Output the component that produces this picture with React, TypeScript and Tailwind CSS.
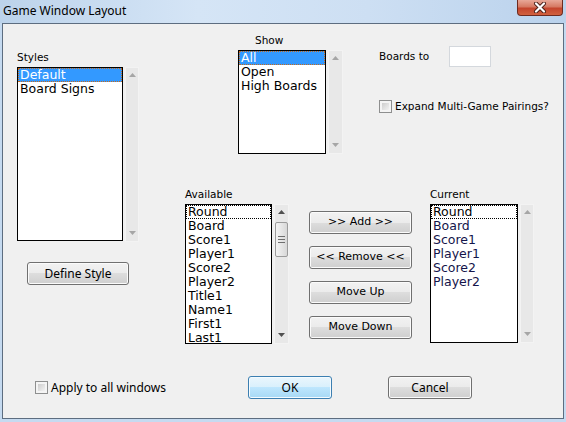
import React from 'react';

const segoe = "font-['Noto_Sans',sans-serif]";
const tahoma = "font-['DejaVu_Sans',sans-serif]";

interface ListBoxProps {
  items: string[];
  selected?: number;
  focused?: number;
  size: string;
  textColor?: string;
}

const ListBox: React.FC<ListBoxProps> = ({ items, selected, focused, size, textColor = 'text-black' }) => (
  <div className={`${size} border border-black bg-white overflow-hidden ${tahoma} text-[12.5px] leading-[14px] ${textColor}`}>
    {items.map((item, index) => {
      const isSel = index === selected;
      const isFocus = index === focused;
      return (
        <div
          key={index}
          className={
            isSel
              ? 'h-[14px] px-[1px] bg-[#3399ff] text-white border border-dotted border-[#c86a1a] leading-[12px]'
              : isFocus
              ? 'h-[14px] px-[1px] text-black border border-dotted border-black leading-[12px]'
              : 'h-[14px] px-[2px] whitespace-nowrap'
          }
        >
          {item}
        </div>
      );
    })}
  </div>
);

const Arrow: React.FC<{ down?: boolean; dark?: boolean }> = ({ down, dark }) => (
  <svg width="7" height="4" viewBox="0 0 7 4">
    <polygon points={down ? '0,0 7,0 3.5,4' : '3.5,0 7,4 0,4'} fill={dark ? '#505050' : '#a6a6a6'} />
  </svg>
);

const ScrollStrip: React.FC<{ size: string; thumb?: boolean }> = ({ size, thumb }) => (
  <div className={`${size} bg-[#e8e8e8] border border-[#f3f3f3] flex flex-col items-center pt-[5px] pb-[6px]`}>
    <Arrow dark={thumb} />
    {thumb && (
      <div className="mt-[8px] w-[13px] h-[35px] rounded-[2px] border border-[#9b9b9b] bg-[linear-gradient(90deg,#f4f4f4,#e6e6e6_50%,#d8d8d8)] flex flex-col items-center justify-center gap-[2px]">
        <div className="w-[7px] h-[1px] bg-[#6e6e6e]" />
        <div className="w-[7px] h-[1px] bg-[#6e6e6e]" />
        <div className="w-[7px] h-[1px] bg-[#6e6e6e]" />
      </div>
    )}
    <div className="flex-1" />
    <Arrow down dark={thumb} />
  </div>
);

const WinButton: React.FC<{ label: string; size: string; primary?: boolean; font?: string }> = ({
  label,
  size,
  primary,
  font = `${segoe} text-[12px]`,
}) => (
  <div
    className={`${size} rounded-[3px] border flex items-center justify-center text-black ${font} ${
      primary
        ? 'border-[#3c7fb1] bg-[linear-gradient(#eaf6fd,#d9f0fc_50%,#bee6fd_50%,#a7d9f5)] shadow-[inset_0_0_0_1px_#f4fbff]'
        : 'border-[#707070] bg-[linear-gradient(#f2f2f2,#ebebeb_50%,#dddddd_50%,#cfcfcf)] shadow-[inset_0_0_0_1px_#fbfbfb]'
    }`}
  >
    {label}
  </div>
);

const CheckBox: React.FC = () => (
  <div className="w-[13px] h-[13px] border border-[#8e8f8f] bg-[#f4f4f4] p-[2px]">
    <div className="w-full h-full bg-[linear-gradient(135deg,#cdcdcd,#f2f2f2)]" />
  </div>
);

const tahomaBtn = `${tahoma} text-[11px]`;

export default function App() {
  return (
    <div className="w-[566px] h-[422px] bg-[#c5daf0] overflow-hidden">
      {/* Title bar */}
      <div className="h-[23px] flex items-start bg-[linear-gradient(90deg,#bcd3eb,#d5e5f6_35%,#cddff3_65%,#bad2ec)]">
        <div className={`pl-[3px] pt-[2px] text-[12px] text-black ${segoe} flex-1`}>Game Window Layout</div>
        <div className="mr-[3px] w-[46px] h-[16px] rounded-b-[4px] border border-t-0 border-[#6e2b20] bg-[linear-gradient(#e8a898,#d67a63_45%,#c4452d_55%,#d1613f)] flex items-center justify-center">
          <svg width="14" height="11" viewBox="0 0 14 11">
            <path d="M3 1.5 L11 9.5 M11 1.5 L3 9.5" stroke="#4a2018" strokeWidth="4" strokeLinecap="round" />
            <path d="M3 1.5 L11 9.5 M11 1.5 L3 9.5" stroke="#ffffff" strokeWidth="2.2" strokeLinecap="round" />
          </svg>
        </div>
      </div>

      {/* Client area */}
      <div className="ml-[2px] w-[562px] h-[396px] border border-[#5d6d80] bg-[#f0f0f0]">
        <div className="flex items-start">
          {/* Styles */}
          <div className="ml-[14px] mt-[26px] flex flex-col">
            <div className={`h-[14px] leading-[14px] text-[10.5px] ${tahoma}`}>Styles</div>
            <div className="mt-[3px] flex gap-[2px]">
              <ListBox items={['Default', 'Board Signs']} selected={0} size="w-[106px] h-[174px]" />
              <ScrollStrip size="w-[14px] h-[175px]" />
            </div>
            <div className="mt-[20px] ml-[10px]">
              <WinButton label="Define Style" size="w-[102px] h-[23px]" />
            </div>
          </div>

          <div className="ml-[46px] flex flex-col">
            {/* Show + Boards */}
            <div className="flex items-start">
              <div className="ml-[53px] mt-[9px] flex flex-col">
                <div className={`ml-[17px] h-[14px] leading-[14px] text-[10.5px] ${tahoma}`}>Show</div>
                <div className="mt-[3px] flex gap-[2px]">
                  <ListBox items={['All', 'Open', 'High Boards']} selected={0} size="w-[88px] h-[104px]" />
                  <ScrollStrip size="w-[15px] h-[104px]" />
                </div>
              </div>
              <div className="ml-[36px] mt-[22px] flex flex-col">
                <div className="flex items-center">
                  <span className={`w-[70px] text-[10.5px] ${tahoma}`}>Boards to</span>
                  <div className="w-[42px] h-[21px] bg-white border border-[#d4d8dd]" />
                </div>
                <div className="mt-[32px] flex items-center gap-[3px]">
                  <CheckBox />
                  <span className={`text-[10.5px] ${tahoma}`}>Expand Multi-Game Pairings?</span>
                </div>
              </div>
            </div>

            {/* Available / buttons / Current */}
            <div className="mt-[33px] flex items-start">
              <div className="flex flex-col">
                <div className={`h-[14px] leading-[14px] text-[10.5px] ${tahoma}`}>Available</div>
                <div className="mt-[3px] flex gap-[2px]">
                  <ListBox
                    items={['Round', 'Board', 'Score1', 'Player1', 'Score2', 'Player2', 'Title1', 'Name1', 'First1', 'Last1']}
                    focused={0}
                    size="w-[87px] h-[140px]"
                  />
                  <ScrollStrip size="w-[15px] h-[140px]" thumb />
                </div>
              </div>
              <div className="ml-[20px] mt-[24px] flex flex-col gap-[12px]">
                <WinButton label=">> Add >>" size="w-[103px] h-[23px]" font={tahomaBtn} />
                <WinButton label="<< Remove <<" size="w-[103px] h-[23px]" font={tahomaBtn} />
                <WinButton label="Move Up" size="w-[103px] h-[23px]" font={tahomaBtn} />
                <WinButton label="Move Down" size="w-[103px] h-[23px]" font={tahomaBtn} />
              </div>
              <div className="ml-[18px] flex flex-col">
                <div className={`h-[14px] leading-[14px] text-[10.5px] ${tahoma}`}>Current</div>
                <div className="mt-[3px] flex gap-[2px]">
                  <ListBox
                    items={['Round', 'Board', 'Score1', 'Player1', 'Score2', 'Player2']}
                    focused={0}
                    size="w-[88px] h-[139px]"
                    textColor="text-[#14144a]"
                  />
                  <ScrollStrip size="w-[14px] h-[139px]" />
                </div>
              </div>
            </div>
          </div>
        </div>

        {/* Bottom row */}
        <div className="mt-[32px] flex items-center h-[23px]">
          <div className="ml-[32px] w-[213px] flex items-center gap-[3px]">
            <CheckBox />
            <span className={`text-[12px] ${segoe}`}>Apply to all windows</span>
          </div>
          <WinButton label="OK" size="w-[84px] h-[23px]" primary />
          <div className="ml-[56px]">
            <WinButton label="Cancel" size="w-[84px] h-[23px]" />
          </div>
        </div>
      </div>
    </div>
  );
}
